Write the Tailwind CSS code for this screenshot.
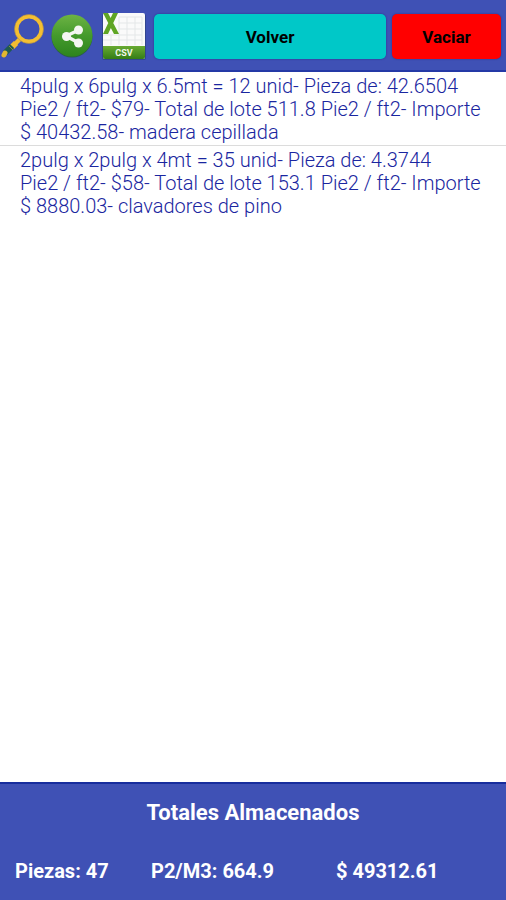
<!DOCTYPE html>
<html lang="es">
<head>
    <meta charset="UTF-8">
    <meta name="viewport" content="width=device-width, initial-scale=1.0">
    <title>Totales Almacenados</title>
    <script src="https://cdn.jsdelivr.net/npm/@tailwindcss/browser@4"></script>
</head>
<body class="min-h-screen flex flex-col bg-white font-[Roboto,sans-serif]">

    <!-- Toolbar -->
    <header class="flex items-center bg-[#3f51b5] border-b-2 border-[#2439a6] pt-3 pb-[10px] pr-[5px]">
        <button type="button" aria-label="Buscar" class="shrink-0 w-12 h-12">
            <svg class="w-12 h-12" viewBox="0 0 48 48" fill="none">
                <path d="M20 27L12 35" stroke="#f2bd30" stroke-width="4.500"/>
                <path d="M16 31L12 35" stroke="#f2bd30" stroke-width="6"/>
                <path d="M12 34L5 41" stroke="#1f5a50" stroke-width="6"/>
                <path d="M9 34L13 38" stroke="#8a8b3c" stroke-width="1"/>
                <path d="M5 41L4 43" stroke="#e3b62f" stroke-width="5" stroke-linecap="round"/>
                <circle cx="29" cy="17" r="12.500" stroke="#f4bf32" stroke-width="4"/>
                <circle cx="29" cy="17" r="14.500" stroke="#a98a4b" stroke-width="0.6"/>
            </svg>
        </button>
        <button type="button" aria-label="Compartir" class="shrink-0 w-12 h-12">
            <svg class="w-12 h-12" viewBox="0 0 48 48" fill="none">
                <defs>
                    <linearGradient id="shareGreen" x1="0" y1="0" x2="0" y2="1">
                        <stop offset="0" stop-color="#6db344"/>
                        <stop offset="0.5" stop-color="#449a2c"/>
                        <stop offset="1" stop-color="#2d841d"/>
                    </linearGradient>
                </defs>
                <ellipse cx="24" cy="24.500" rx="20.500" ry="21" fill="#2b5c48"/>
                <ellipse cx="24" cy="23.500" rx="20.500" ry="21" fill="url(#shareGreen)"/>
                <path d="M31 18L18 24L31 31" stroke="#f4f6f2" stroke-width="3.500"/>
                <circle cx="30.500" cy="18" r="4.500" fill="#f4f6f2"/>
                <circle cx="18.500" cy="24.500" r="4.500" fill="#f4f6f2"/>
                <circle cx="30.500" cy="31" r="4.500" fill="#f4f6f2"/>
            </svg>
        </button>
        <button type="button" aria-label="Exportar CSV" class="shrink-0 w-14 h-12">
            <svg class="w-14 h-12" viewBox="0 0 56 48">
                <defs>
                    <linearGradient id="csvGreen" x1="0" y1="0" x2="0" y2="1">
                        <stop offset="0" stop-color="#68aa32"/>
                        <stop offset="1" stop-color="#347d16"/>
                    </linearGradient>
                </defs>
                <rect x="6" y="2" width="44" height="46" rx="2" fill="#31458f"/>
                <rect x="7" y="1" width="42" height="46" rx="2" fill="#fafafa"/>
                <path d="M7 23H46M7 28H46M23 5H46M23 11H46M23 17H46M23 5V33M31 5V33M39 5V33M46 5V33M15 23V33" stroke="#e4e7e8" stroke-width="1" fill="none"/>
                <path d="M7 34H49V45Q49 47 47 47H9Q7 47 7 45Z" fill="url(#csvGreen)"/>
                <path d="M7 1H12L23 22H18ZM17 1H22L12 22H7Z" fill="#5fa524"/>
                <text x="28" y="44" text-anchor="middle" font-size="9" font-weight="700" fill="#f3f8ec">CSV</text>
            </svg>
        </button>
        <button type="button" class="grow ml-0.5 pt-1 h-[45px] rounded-[5px] bg-[#00c8c8] text-black text-[17px] font-bold shadow-[0_0_2px_#26308a]">Volver</button>
        <button type="button" class="ml-1.5 pt-1 w-[109px] h-[45px] rounded-[5px] bg-[#ff0000] text-black text-[17px] font-bold shadow-[0_0_2px_#26308a]">Vaciar</button>
    </header>

    <!-- Stored lots -->
    <main class="grow">
        <ul class="text-[20px] leading-[23px] font-light text-[#1a26a0]">
            <li class="px-5 pt-[3px] pb-px border-b border-[#dcdcdc]">4pulg x 6pulg x 6.5mt = 12 unid- Pieza de: 42.6504 Pie2&nbsp;/ ft2- $79- Total de lote 511.8 Pie2 / ft2- Importe $&nbsp;40432.58- madera cepillada</li>
            <li class="px-5 pt-[3px] pb-px">2pulg x 2pulg x 4mt = 35 unid- Pieza de: 4.3744 Pie2&nbsp;/ ft2- $58- Total de lote 153.1 Pie2 / ft2- Importe $&nbsp;8880.03- clavadores de pino</li>
        </ul>
    </main>

    <!-- Totals -->
    <footer class="bg-[#3f51b5] border-t-2 border-[#172d9d] pt-4 pb-4 text-white font-bold">
        <h2 class="text-center text-[22px] leading-[26px]">Totales Almacenados</h2>
        <div class="grid grid-cols-[136fr_185fr_170fr] pl-[15px] mt-8 text-[20px] leading-[26px]">
            <span>Piezas: 47</span>
            <span>P2/M3: 664.9</span>
            <span>$ 49312.61</span>
        </div>
    </footer>

</body>
</html>
